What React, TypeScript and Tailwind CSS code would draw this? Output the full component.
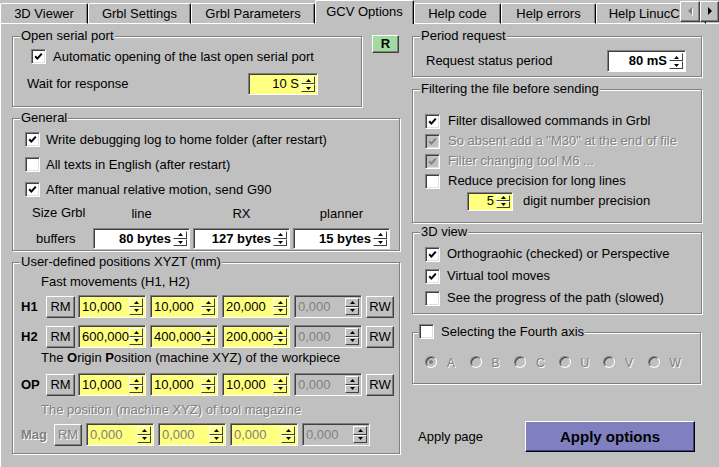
import React from "react";

type Tone = "yellow" | "white" | "grey";

const dimText = "text-[#808080] [text-shadow:1px_1px_0_#fff]";
const raised =
  "border border-t-white border-l-white border-r-[#404040] border-b-[#404040] shadow-[inset_-1px_-1px_0_#808080]";
const sunken =
  "border border-t-[#808080] border-l-[#808080] border-r-white border-b-white shadow-[inset_1px_1px_0_#404040]";

const toneBg: Record<Tone, string> = {
  yellow: "bg-[#ffff80]",
  white: "bg-white",
  grey: "bg-[#c0c0c0]",
};

const Tri = ({ up }: { up?: boolean }) => (
  <svg width="5" height="3" viewBox="0 0 5 3">
    <polygon points={up ? "2.5,0 5,3 0,3" : "0,0 5,0 2.5,3"} fill="#000" />
  </svg>
);

const Spin = ({
  value,
  className,
  tone = "yellow",
  bold = false,
  left = false,
  dim = false,
}: {
  value: string;
  className: string;
  tone?: Tone;
  bold?: boolean;
  left?: boolean;
  dim?: boolean;
}) => (
  <div className={`flex items-stretch shrink-0 ${sunken} ${toneBg[tone]} ${className}`}>
    <span
      className={`flex-1 flex items-center whitespace-nowrap overflow-hidden ${
        left ? "justify-start pl-[3px]" : "justify-end pr-[2px]"
      } ${bold ? "font-bold" : ""} ${dim ? "text-[#808080]" : ""}`}
    >
      {value}
    </span>
    <div className="flex flex-col w-[14px] my-[2px] mr-[2px] shrink-0">
      <div className={`flex-1 flex items-center justify-center ${raised} shadow-none`}>
        <Tri up />
      </div>
      <div className={`flex-1 flex items-center justify-center ${raised} shadow-none`}>
        <Tri />
      </div>
    </div>
  </div>
);

const Check = ({ on = false, dim = false }: { on?: boolean; dim?: boolean }) => (
  <span
    className={`inline-flex w-[15px] h-[15px] shrink-0 items-center justify-center border border-t-[#808080] border-l-[#808080] border-r-white border-b-white shadow-[inset_1px_1px_0_#404040,inset_-1px_-1px_0_#dfdfdf] ${
      dim ? "bg-[#c0c0c0]" : "bg-white"
    }`}
  >
    {on && (
      <svg width="9" height="9" viewBox="0 0 9 9">
        <path d="M1.2 4.2 L3.4 6.6 L7.8 1.6" stroke={dim ? "#808080" : "#000"} strokeWidth="2" fill="none" />
      </svg>
    )}
  </span>
);

const CheckRow = ({
  on,
  dim,
  label,
  className,
}: {
  on?: boolean;
  dim?: boolean;
  label: string;
  className: string;
}) => (
  <div className={`flex items-center ${className}`}>
    <Check on={on} dim={dim} />
    <span className={`whitespace-nowrap ${dim ? dimText : ""}`}>{label}</span>
  </div>
);

const Radio = ({ on = false }: { on?: boolean }) => (
  <span className="w-[12px] h-[12px] shrink-0 rounded-full border border-t-[#808080] border-l-[#808080] border-r-white border-b-white bg-[#c0c0c0] shadow-[inset_1px_1px_0_#404040] flex items-center justify-center">
    {on && <span className="w-[4px] h-[4px] rounded-full bg-[#808080]" />}
  </span>
);

const Group = ({
  title,
  className,
  titleClass = "left-[7px]",
  children,
}: {
  title: React.ReactNode;
  className: string;
  titleClass?: string;
  children: React.ReactNode;
}) => (
  <div className={`relative shrink-0 border border-[#808080] shadow-[1px_1px_0_#fff,inset_1px_1px_0_#fff] ${className}`}>
    <div className={`absolute -top-[9px] bg-[#c0c0c0] px-[1px] leading-[15px] whitespace-nowrap ${titleClass}`}>
      {title}
    </div>
    {children}
  </div>
);

const Btn = ({ label, className, dim = false }: { label: string; className: string; dim?: boolean }) => (
  <div className={`flex items-center justify-center shrink-0 bg-[#c0c0c0] ${raised} ${className} ${dim ? dimText : ""}`}>
    {label}
  </div>
);

const PosRow = ({ label, vals, className }: { label: string; vals: string[]; className: string }) => (
  <div className={`flex items-center h-[23px] pl-[8px] ${className}`}>
    <span className="w-[25px] font-bold">{label}</span>
    <Btn label="RM" className="w-[29px] h-[22px]" />
    <div className="flex items-center gap-[4px] ml-[3px]">
      {vals.map((v, i) => (
        <Spin key={i} value={v} left className="w-[68px] h-[23px]" />
      ))}
      <Spin value="0,000" left tone="grey" dim className="w-[68px] h-[23px]" />
      <Btn label="RW" className="w-[28px] h-[22px]" />
    </div>
  </div>
);

const tabs = [
  { label: "3D Viewer", w: "w-[88px]" },
  { label: "Grbl Settings", w: "w-[103px]" },
  { label: "Grbl Parameters", w: "w-[124px]" },
  { label: "GCV Options", w: "w-[99px]", active: true },
  { label: "Help code", w: "w-[87px]" },
  { label: "Help errors", w: "w-[95px]" },
  { label: "Help LinucCnc", w: "w-[110px]" },
];

const TabBar = () => (
  <div className="relative h-[24px] flex items-end shrink-0 overflow-hidden">
    {tabs.map((t) =>
      t.active ? (
        <div
          key={t.label}
          className={`${t.w} h-[24px] shrink-0 flex items-center justify-center pb-[1px] border-t border-l border-r border-t-white border-l-white border-r-black shadow-[inset_-1px_0_0_#808080] rounded-t-[2px]`}
        >
          {t.label}
        </div>
      ) : (
        <div
          key={t.label}
          className={`${t.w} h-[21px] shrink-0 flex items-center justify-center whitespace-nowrap overflow-hidden border-t border-l border-r border-b border-t-white border-l-white border-b-white border-r-black shadow-[inset_-1px_0_0_#808080] rounded-t-[2px]`}
        >
          {t.label}
        </div>
      )
    )}
    <div className="flex-1 h-[1px] bg-white" />
    <div className="absolute right-0 top-[1px] flex">
      <div className={`w-[20px] h-[21px] flex items-center justify-center bg-[#c0c0c0] ${raised}`}>
        <svg width="6" height="9" viewBox="0 0 6 9">
          <polygon points="5,0 5,8 1,4" fill="#fff" transform="translate(1,1)" />
          <polygon points="5,0 5,8 1,4" fill="#808080" />
        </svg>
      </div>
      <div className={`w-[19px] h-[21px] flex items-center justify-center bg-[#c0c0c0] ${raised}`}>
        <svg width="6" height="9" viewBox="0 0 6 9">
          <polygon points="1,0 1,8 5,4" fill="#000" />
        </svg>
      </div>
    </div>
  </div>
);

export default function App() {
  return (
    <div className="w-[719px] h-[467px] bg-[#c0c0c0] text-[13px] leading-[16px] text-black overflow-hidden flex flex-col font-['Liberation_Sans',Arial,sans-serif]">
      <TabBar />
      <div className="flex-1 flex border-l border-white pl-[11px] pt-[12px]">
        {/* left column */}
        <div className="w-[389px] shrink-0 flex flex-col">
          <div className="flex items-start">
            <Group title="Open serial port" className="w-[350px] h-[71px] pt-[12px] pl-[18px]">
              <CheckRow on label="Automatic opening of the last open serial port" className="h-[15px] gap-[7px]" />
              <div className="flex items-center h-[22px] mt-[9px] -ml-[4px]">
                <span className="w-[221px]">Wait for response</span>
                <Spin value="10 S" className="w-[70px] h-[22px]" />
              </div>
            </Group>
            <div className={`ml-[10px] -mt-[1px] w-[27px] h-[18px] flex items-center justify-center font-bold bg-[#a0dca0] ${raised}`}>
              R
            </div>
          </div>

          <Group title="General" className="mt-[11px] w-[388px] h-[133px] pt-[13px] pl-[12px]">
            <div className="flex flex-col gap-[10px]">
              <CheckRow on label="Write debugging log to home folder (after restart)" className="h-[15px] gap-[6px]" />
              <CheckRow label="All texts in English (after restart)" className="h-[15px] gap-[6px]" />
              <CheckRow on label="After manual relative motion, send G90" className="h-[15px] gap-[6px]" />
            </div>
            <div className="grid grid-cols-[77px_97px_97px_97px] grid-rows-[16px_21px] gap-x-[3px] gap-y-[6px] mt-[9px] -ml-[12px]">
              <span className="pl-[19px] -mt-[1px]">Size Grbl</span>
              <span className="text-center">line</span>
              <span className="text-center">RX</span>
              <span className="text-center">planner</span>
              <span className="pl-[23px] flex items-center">buffers</span>
              <Spin value="80 bytes" tone="white" bold className="w-[97px] h-[21px]" />
              <Spin value="127 bytes" tone="white" bold className="w-[97px] h-[21px]" />
              <Spin value="15 bytes" tone="white" bold className="w-[97px] h-[21px]" />
            </div>
          </Group>

          <Group title="User-defined positions XYZT (mm)" className="mt-[11px] w-[388px] h-[192px] pt-[11px]">
            <div className="h-[16px] pl-[28px]">Fast movements (H1, H2)</div>
            <PosRow label="H1" vals={["10,000", "10,000", "20,000"]} className="mt-[5px]" />
            <PosRow label="H2" vals={["600,000", "400,000", "200,000"]} className="mt-[7px]" />
            <div className="h-[16px] pl-[28px] mt-[2px]">
              The <b>O</b>rigin <b>P</b>osition (machine XYZ) of the workpiece
            </div>
            <PosRow label="OP" vals={["10,000", "10,000", "10,000"]} className="mt-[7px]" />
            <div className={`h-[16px] pl-[28px] mt-[6px] ${dimText}`}>The position (machine XYZ) of tool magazine</div>
            <div className="flex items-center h-[23px] pl-[8px] mt-[5px]">
              <span className={`w-[33px] font-bold ${dimText}`}>Mag</span>
              <Btn label="RM" dim className="w-[28px] h-[22px]" />
              <div className="flex items-center gap-[4px] ml-[4px]">
                <Spin value="0,000" left dim className="w-[68px] h-[23px]" />
                <Spin value="0,000" left dim className="w-[68px] h-[23px]" />
                <Spin value="0,000" left dim className="w-[68px] h-[23px]" />
                <Spin value="0,000" left dim tone="grey" className="w-[68px] h-[23px]" />
              </div>
            </div>
          </Group>
        </div>

        {/* right column */}
        <div className="ml-[11px] w-[291px] shrink-0 flex flex-col">
          <Group title="Period request" className="w-[290px] h-[41px] pt-[13px] pl-[13px]">
            <div className="flex items-center h-[22px]">
              <span className="w-[181px]">Request status period</span>
              <Spin value="80 mS" tone="white" bold className="w-[79px] h-[22px]" />
            </div>
          </Group>

          <Group title="Filtering the file before sending" className="mt-[12px] w-[290px] h-[134px] pt-[21px] pl-[12px]">
            <CheckRow on label="Filter disallowed commands in Grbl" className="h-[20px] gap-[8px]" />
            <CheckRow on dim label={'So absent add a "M30" at the end of file'} className="h-[20px] gap-[8px]" />
            <CheckRow on dim label="Filter changing tool M6 ..." className="h-[20px] gap-[8px]" />
            <CheckRow label="Reduce precision for long lines" className="h-[20px] gap-[8px]" />
            <div className="flex items-center h-[20px] pl-[42px]">
              <Spin value="5" className="w-[46px] h-[19px]" />
              <span className="ml-[10px]">digit number precision</span>
            </div>
          </Group>

          <Group title="3D view" className="mt-[9px] w-[290px] h-[82px] pt-[10px] pl-[12px]">
            <CheckRow on label="Orthograohic (checked) or Perspective" className="h-[22px] gap-[7px]" />
            <CheckRow on label="Virtual tool moves" className="h-[22px] gap-[7px]" />
            <CheckRow label="See the progress of the path (slowed)" className="h-[22px] gap-[7px]" />
          </Group>

          <Group
            title={
              <span className="flex items-center gap-[7px]">
                <Check />
                <span>Selecting the Fourth axis</span>
              </span>
            }
            titleClass="left-[5px]"
            className="mt-[18px] w-[289px] h-[52px] pt-[21px] pl-[12px]"
          >
            <div className="flex h-[16px] items-center">
              {["A", "B", "C", "U", "V", "W"].map((l, i) => (
                <div key={l} className="w-[44.5px] shrink-0 flex items-center">
                  <Radio on={i === 0} />
                  <span className={`ml-[10px] text-[12px] mt-[2px] ${dimText}`}>{l}</span>
                </div>
              ))}
            </div>
          </Group>

          <div className="flex items-center mt-[37px]">
            <span className="w-[113px] pl-[6px]">Apply page</span>
            <div className="w-[170px] h-[31px] flex items-center justify-center bg-[#8080c0] font-bold text-[15px] border border-t-white border-l-white border-r-black border-b-black shadow-[inset_-1px_-1px_0_#404080]">
              Apply options
            </div>
          </div>
        </div>
      </div>
    </div>
  );
}
